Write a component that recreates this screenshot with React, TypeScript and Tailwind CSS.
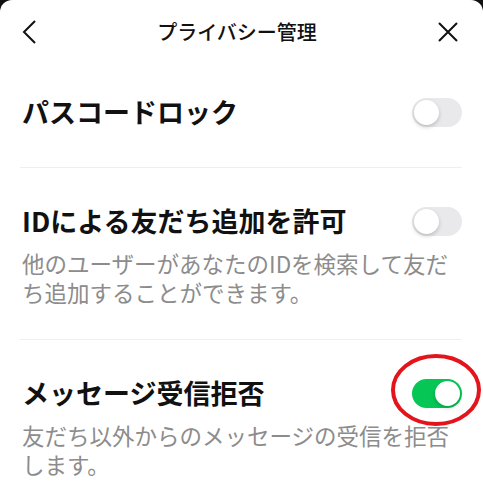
import React from "react";

const FONT = { fontFamily: '"Noto Sans CJK JP", "Noto Sans", sans-serif' };

/* ── toggle switch ─────────────────────────────── */
function Toggle({ on }: { on: boolean }) {
  return (
    <div
      className={`relative w-[50px] h-[29px] rounded-full shrink-0 ${
        on ? "bg-[#06c755]" : "bg-[#e9e9eb]"
      }`}
    >
      <div
        className={`absolute top-[2px] w-[25px] h-[25px] rounded-full bg-white shadow-[0_2px_4px_rgba(0,0,0,0.2)] ${
          on ? "left-[23px]" : "left-[2px]"
        }`}
      />
    </div>
  );
}

function Row({
  title,
  desc,
  on,
  last,
  first,
}: {
  title: string;
  desc?: React.ReactNode;
  on: boolean;
  last?: boolean;
  first?: boolean;
}) {
  return (
    <div
      className={`${first ? "pt-[30px] pb-[37px]" : "pt-[35px] pb-[32px]"} ${
        last ? "" : "border-b border-[#efefef]"
      }`}
    >
      <div className="flex items-center justify-between">
        <h2 className="text-[27px] leading-[36px] font-bold text-[#111] pl-[2px]">
          {title}
        </h2>
        <Toggle on={on} />
      </div>
      {desc && (
        <p className="mt-[10px] text-[22.5px] leading-[29px] text-[#8c8c8c] pl-[2px]">
          {desc}
        </p>
      )}
    </div>
  );
}

export default function App() {
  return (
    <div className="bg-[#111] w-[483px] h-[500px] overflow-hidden" style={FONT}>
      <div className="relative bg-white h-full rounded-t-[12px]">
        {/* ── HEADER ─────────────────────────────── */}
        <header className="h-[64px] px-[20px] flex items-center justify-between">
          <svg width="16" height="24" viewBox="0 0 16 24" fill="none" className="ml-[1px]">
            <path d="M14 1 L3 12 L14 23" stroke="#111" strokeWidth="2" />
          </svg>
          <h1 className="text-[20px] font-medium text-[#111]">プライバシー管理</h1>
          <svg width="22" height="20" viewBox="0 0 22 20" fill="none" className="mr-[4px]">
            <path d="M2 1 L20 19 M20 1 L2 19" stroke="#111" strokeWidth="2" />
          </svg>
        </header>

        {/* ── SETTINGS ───────────────────────────── */}
        <div className="pl-[20px] pr-[21px]">
          <Row first title="パスコードロック" on={false} />
          <Row
            title="IDによる友だち追加を許可"
            on={false}
            desc={
              <>
                他のユーザーがあなたのIDを検索して友だ
                <br />
                ち追加することができます。
              </>
            }
          />
          <Row
            last
            title="メッセージ受信拒否"
            on={true}
            desc={
              <>
                友だち以外からのメッセージの受信を拒否
                <br />
                します。
              </>
            }
          />
        </div>

        {/* red annotation circle */}
        <svg
          className="absolute left-[388px] top-[352px] pointer-events-none"
          width="95"
          height="76"
          viewBox="0 0 95 76"
          fill="none"
        >
          <ellipse cx="48" cy="38" rx="43" ry="34" stroke="#e3141c" strokeWidth="4" />
        </svg>
      </div>
    </div>
  );
}
